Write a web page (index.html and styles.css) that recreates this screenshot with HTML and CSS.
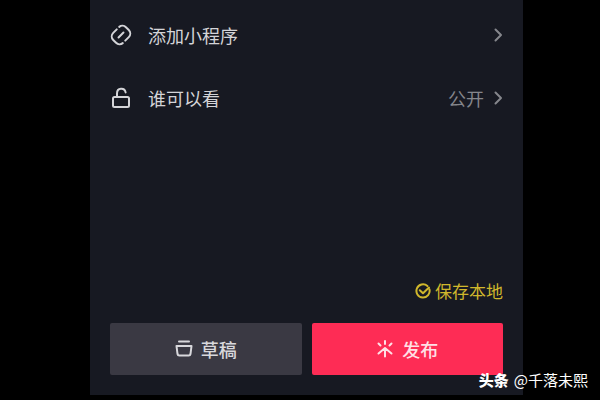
FILE: index.html
```html
<!DOCTYPE html>
<html lang="zh-CN">
<head>
<meta charset="utf-8">
<meta name="viewport" content="width=device-width, initial-scale=1">
<title>发布</title>
<link rel="stylesheet" href="styles.css">
</head>
<body>
<main class="panel">
  <nav class="options">
    <a class="option" href="#">
      <svg class="icon" viewBox="0 0 22 22" aria-hidden="true">
        <g transform="translate(11 11) rotate(-45)">
          <path d="M1 -7 H-4 A5 5 0 0 0 -9 -2 V2 A5 5 0 0 0 -4.5 7"/>
          <path d="M-1 7 H4 A5 5 0 0 0 9 2 V-2 A5 5 0 0 0 4.5 -7"/>
          <path d="M-3.5 0 H3.5"/>
        </g>
      </svg>
      <span class="option-name">添加小程序</span>
      <svg class="chevron" viewBox="0 0 10 16" aria-hidden="true"><path d="M2.5 2.5 L8 8 L2.5 13.5"/></svg>
    </a>
    <a class="option" href="#">
      <svg class="icon" viewBox="0 0 22 22" aria-hidden="true">
        <rect x="3" y="10" width="16" height="10" rx="1.5"/>
        <path d="M7 10 V6.5 C7 0.6 14.6 0.4 15.6 5.4"/>
      </svg>
      <span class="option-name">谁可以看</span>
      <span class="option-value">公开</span>
      <svg class="chevron" viewBox="0 0 10 16" aria-hidden="true"><path d="M2.5 2.5 L8 8 L2.5 13.5"/></svg>
    </a>
  </nav>
  <label class="save">
    <input class="save-input" type="checkbox" checked>
    <svg class="save-icon" viewBox="0 0 16 16" aria-hidden="true">
      <path d="M14.4 6.2 A6.6 6.6 0 1 1 12.4 3"/>
      <path d="M4.8 7.2 L8 10.2 L14 4.6"/>
    </svg>
    <span>保存本地</span>
  </label>
  <div class="actions">
    <button class="action action-draft" type="button">
      <svg class="action-icon" viewBox="0 0 18 18" aria-hidden="true">
        <path d="M4 1.5 H14"/>
        <path d="M1.5 6 H16.5 L15.5 14 Q15.2 15.5 13.7 15.5 H4.3 Q2.8 15.5 2.5 14 Z"/>
      </svg>
      <span>草稿</span>
    </button>
    <button class="action action-publish" type="button">
      <svg class="action-icon" viewBox="0 0 18 18" aria-hidden="true">
        <path d="M9 8 V16.5 M9 1 V4 M2.5 3.5 L4.5 5.5 M15.5 3.5 L13.5 5.5 M2.5 13.5 L9 8 L15.5 13.5"/>
      </svg>
      <span>发布</span>
    </button>
  </div>
</main>
<p class="credit"><strong class="credit-brand">头条</strong><span>@千落未熙</span></p>
</body>
</html>
```
FILE: styles.css
```css
* {
  box-sizing: border-box;
}

body {
  margin: 0;
  padding: 0 77px 5px 90px;
  background: #000;
  color: #d4d4d8;
  font-family: "Noto Sans CJK SC", sans-serif;
  font-size: 18px;
  line-height: 24px;
}

svg {
  flex: none;
  fill: none;
  stroke: currentColor;
  stroke-width: 2;
  stroke-linecap: round;
  stroke-linejoin: round;
}

.panel {
  display: flex;
  flex-direction: column;
  min-height: calc(100vh - 5px);
  padding: 3px 20px 20px;
  background: #171922;
}

.option {
  display: flex;
  align-items: center;
  height: 63px;
  color: inherit;
  text-decoration: none;
}

.icon {
  width: 22px;
  height: 22px;
  margin-right: 16px;
}

.option-name {
  flex: 1;
}

.option-value {
  margin-right: 9px;
  color: #85868c;
}

.chevron {
  width: 10px;
  height: 16px;
  color: #85868c;
}

.save {
  display: flex;
  align-items: center;
  gap: 4px;
  margin: auto 0 20px auto;
  color: #d0b72c;
  font-size: 17px;
}

.save-input {
  position: absolute;
  opacity: 0;
}

.save-icon {
  width: 16px;
  height: 16px;
}

.actions {
  display: grid;
  grid-template-columns: 1fr 1fr;
  gap: 10px;
}

.action {
  display: flex;
  align-items: center;
  justify-content: center;
  gap: 8px;
  height: 52px;
  padding: 0;
  border: 0;
  border-radius: 2px;
  font: inherit;
  font-weight: 500;
}

.action-icon {
  width: 18px;
  height: 18px;
}

.action-draft {
  background: #3a3943;
  color: #d8d8dc;
}

.action-publish {
  background: #fe2c55;
  color: #ffe0e6;
}

.credit {
  position: absolute;
  right: 12px;
  bottom: 8px;
  display: flex;
  gap: 5px;
  margin: 0;
  color: #fff;
  font-size: 15px;
}

.credit-brand {
  font-weight: 900;
}
```
